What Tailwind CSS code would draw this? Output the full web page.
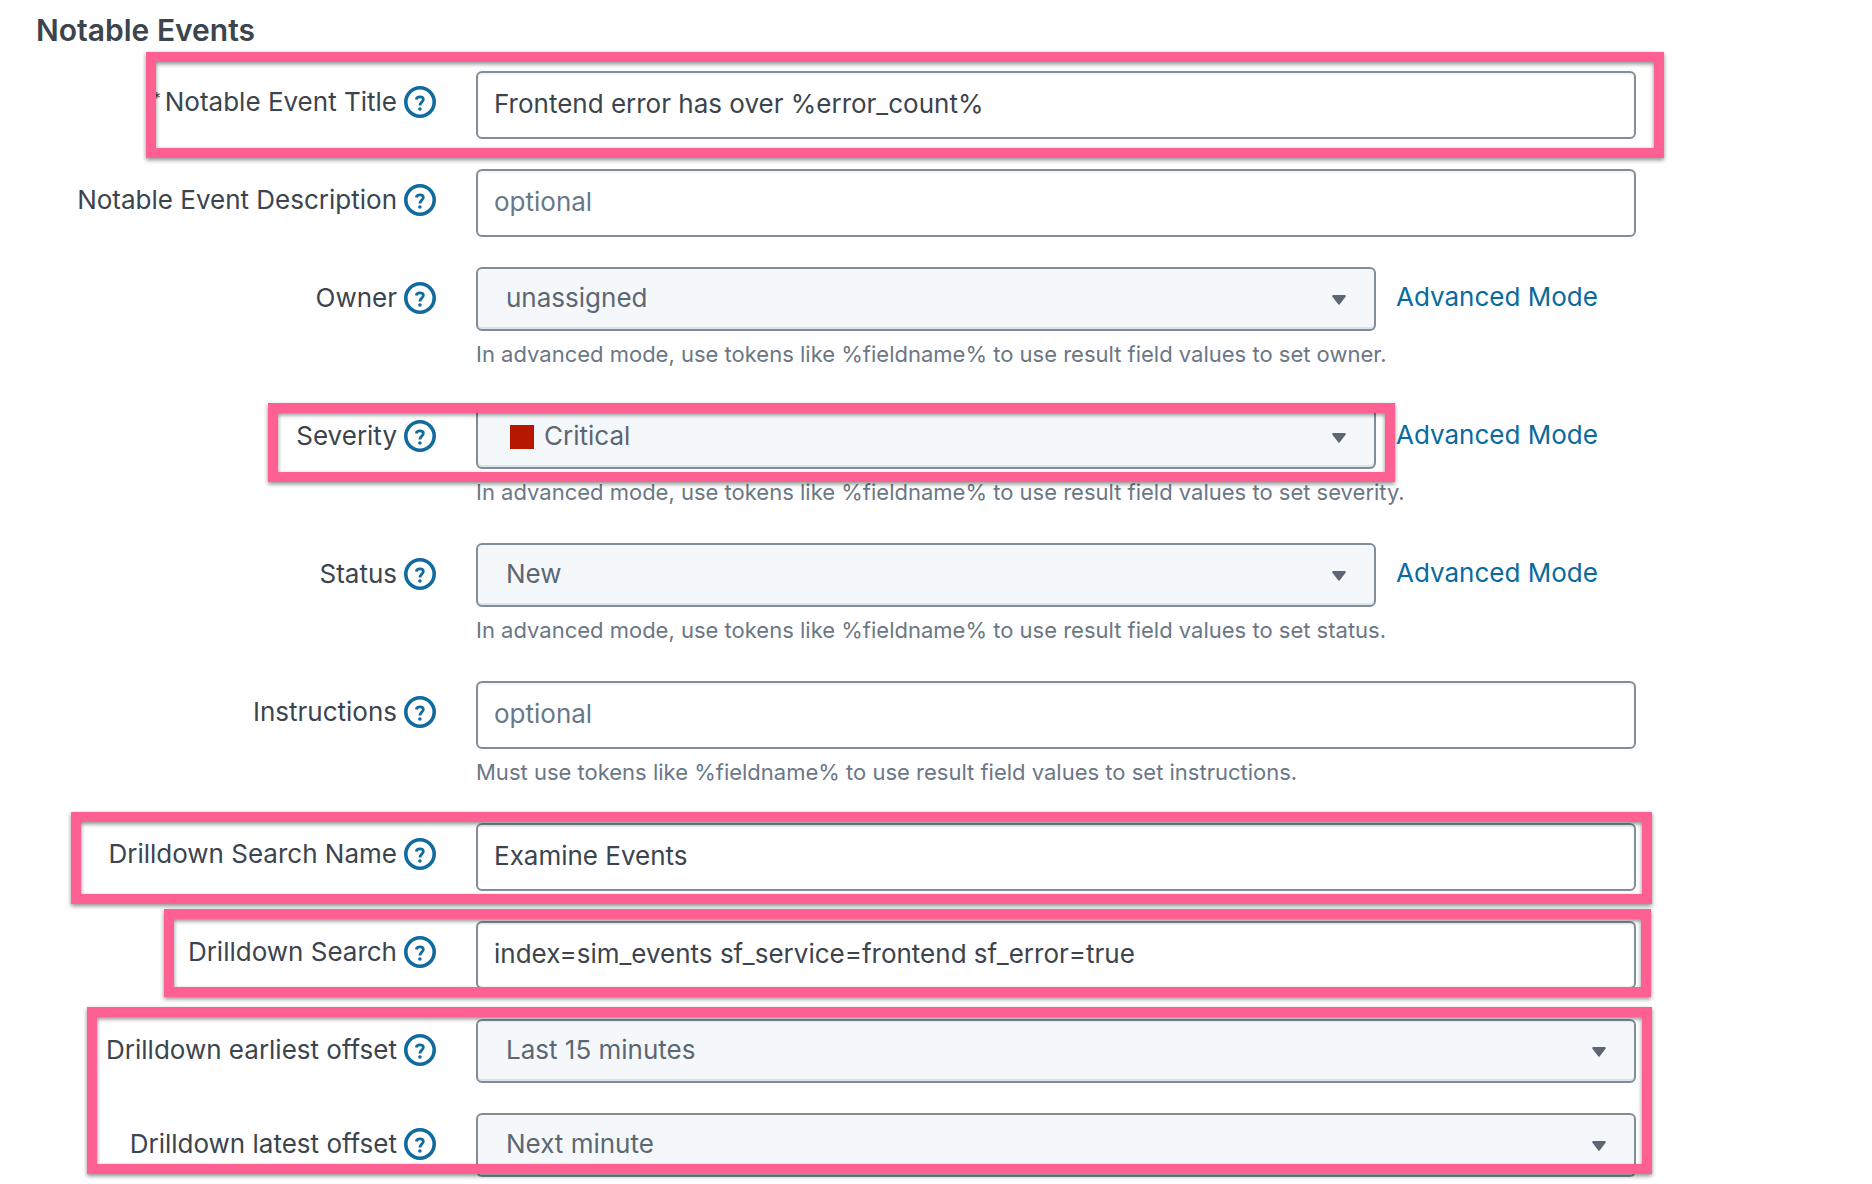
<!DOCTYPE html>
<html lang="en">
<head>
<meta charset="utf-8">
<meta name="viewport" content="width=device-width, initial-scale=1">
<title>Notable Events</title>
<script src="https://cdn.jsdelivr.net/npm/@tailwindcss/browser@4"></script>
</head>
<body class="bg-white font-['Inter',sans-serif] text-[26px] leading-8 text-[#3c444d]">
<svg class="hidden" aria-hidden="true">
  <symbol id="help" viewBox="0 0 32 32">
    <circle cx="16" cy="16" r="14.2" fill="none" stroke="#116b9f" stroke-width="3.6"/>
    <path d="M12.3 13.4C12.6 11.7 14 10.8 15.9 10.8C18 10.8 19.3 11.9 19.3 13.6C19.3 16.2 15.9 16.1 15.9 19.5" fill="none" stroke="#116b9f" stroke-width="2.8"/>
    <circle cx="15.9" cy="23" r="1.8" fill="#116b9f"/>
  </symbol>
  <symbol id="caret" viewBox="0 0 14 10">
    <path d="M1 0H13Q14.4 .6 13.4 1.9L7.8 9.2Q7 10.2 6.2 9.2L.6 1.9Q-.4 .6 1 0Z" fill="#5c6773"/>
  </symbol>
</svg>
<main class="overflow-x-clip pt-3 pr-[236px] pb-[7px] pl-9">
  <h1 class="mb-[23px] text-[30px] leading-9 font-semibold">Notable Events</h1>
  <form class="flex flex-col gap-[30px]">

    <div class="relative grid grid-cols-[400px_minmax(0,1fr)] gap-x-10">
      <div class="flex h-[62px] items-center justify-end gap-[7px]">
        <label for="title" class="flex"><span class="mr-1 text-base leading-6">*</span>Notable Event Title</label>
        <button type="button" aria-label="Help: title"><svg class="size-8"><use href="#help"/></svg></button>
      </div>
      <input id="title" type="text" value="Frontend error has over %error_count%" class="h-[68px] w-full rounded-md border-2 border-[#818d99] bg-white px-4 pb-[3px] shadow-[inset_0_2px_2px_rgba(0,0,0,0.05)]">
      <div class="pointer-events-none absolute -top-[19px] -right-7 left-[110px] h-[106px] border-10 border-[#ff6092] drop-shadow-[0_2px_2px_rgba(0,0,0,0.45)]"></div>
    </div>

    <div class="grid grid-cols-[400px_minmax(0,1fr)] gap-x-10">
      <div class="flex h-[62px] items-center justify-end gap-[7px]">
        <label for="description">Notable Event Description</label>
        <button type="button" aria-label="Help: description"><svg class="size-8"><use href="#help"/></svg></button>
      </div>
      <input id="description" type="text" placeholder="optional" class="h-[68px] w-full rounded-md border-2 border-[#818d99] bg-white px-4 pb-[3px] shadow-[inset_0_2px_2px_rgba(0,0,0,0.05)] placeholder:text-[#6b7785]">
    </div>

    <div class="grid grid-cols-[400px_minmax(0,1fr)] gap-x-10">
      <div class="flex h-[62px] items-center justify-end gap-[7px]">
        <label for="owner">Owner</label>
        <button type="button" aria-label="Help: owner"><svg class="size-8"><use href="#help"/></svg></button>
      </div>
      <div>
        <div class="flex gap-5">
          <div class="relative min-w-0 flex-1">
            <select id="owner" class="block h-16 w-full appearance-none rounded-md border-2 border-[#818d99] bg-[#f5f8fa] pr-14 pb-[3px] pl-7 text-[#5c6773] shadow-[inset_0_-2px_0_#dde3ea]"><option>unassigned</option></select>
            <svg class="pointer-events-none absolute top-7 right-[30px] h-2.5 w-3.5"><use href="#caret"/></svg>
          </div>
          <a href="#" class="flex h-15 w-60 items-center text-[#0a6a9e]">Advanced Mode</a>
        </div>
        <p class="mt-2 pb-1.5 text-[22px] leading-[30px] text-[#6b7785]">In advanced mode, use tokens like %fieldname% to use result field values to set owner.</p>
      </div>
    </div>

    <div class="relative grid grid-cols-[400px_minmax(0,1fr)] gap-x-10">
      <div class="flex h-[62px] items-center justify-end gap-[7px]">
        <label for="severity">Severity</label>
        <button type="button" aria-label="Help: severity"><svg class="size-8"><use href="#help"/></svg></button>
      </div>
      <div>
        <div class="flex gap-5">
          <div class="relative min-w-0 flex-1">
            <select id="severity" class="block h-16 w-full appearance-none rounded-md border-2 border-[#818d99] bg-[#f5f8fa] pr-14 pb-[3px] pl-[66px] text-[#5c6773] shadow-[inset_0_-2px_0_#dde3ea]"><option>Critical</option></select>
            <span class="pointer-events-none absolute top-5 left-[34px] size-6 bg-[#b51700]"></span>
            <svg class="pointer-events-none absolute top-7 right-[30px] h-2.5 w-3.5"><use href="#caret"/></svg>
          </div>
          <a href="#" class="flex h-15 w-60 items-center text-[#0a6a9e]">Advanced Mode</a>
        </div>
        <p class="mt-2 pb-1.5 text-[22px] leading-[30px] text-[#6b7785]">In advanced mode, use tokens like %fieldname% to use result field values to set severity.</p>
      </div>
      <div class="pointer-events-none absolute -top-0.5 right-[241px] left-[232px] h-[79px] border-10 border-[#ff6092] drop-shadow-[0_2px_2px_rgba(0,0,0,0.45)]"></div>
    </div>

    <div class="grid grid-cols-[400px_minmax(0,1fr)] gap-x-10">
      <div class="flex h-[62px] items-center justify-end gap-[7px]">
        <label for="status">Status</label>
        <button type="button" aria-label="Help: status"><svg class="size-8"><use href="#help"/></svg></button>
      </div>
      <div>
        <div class="flex gap-5">
          <div class="relative min-w-0 flex-1">
            <select id="status" class="block h-16 w-full appearance-none rounded-md border-2 border-[#818d99] bg-[#f5f8fa] pr-14 pb-[3px] pl-7 text-[#5c6773] shadow-[inset_0_-2px_0_#dde3ea]"><option>New</option></select>
            <svg class="pointer-events-none absolute top-7 right-[30px] h-2.5 w-3.5"><use href="#caret"/></svg>
          </div>
          <a href="#" class="flex h-15 w-60 items-center text-[#0a6a9e]">Advanced Mode</a>
        </div>
        <p class="mt-2 pb-1.5 text-[22px] leading-[30px] text-[#6b7785]">In advanced mode, use tokens like %fieldname% to use result field values to set status.</p>
      </div>
    </div>

    <div class="grid grid-cols-[400px_minmax(0,1fr)] gap-x-10">
      <div class="flex h-[62px] items-center justify-end gap-[7px]">
        <label for="instructions">Instructions</label>
        <button type="button" aria-label="Help: instructions"><svg class="size-8"><use href="#help"/></svg></button>
      </div>
      <div>
        <input id="instructions" type="text" placeholder="optional" class="block h-[68px] w-full rounded-md border-2 border-[#818d99] bg-white px-4 pb-[3px] shadow-[inset_0_2px_2px_rgba(0,0,0,0.05)] placeholder:text-[#6b7785]">
        <p class="mt-2 pb-1.5 text-[22px] leading-[30px] text-[#6b7785]">Must use tokens like %fieldname% to use result field values to set instructions.</p>
      </div>
    </div>

    <div class="relative grid grid-cols-[400px_minmax(0,1fr)] gap-x-10">
      <div class="flex h-[62px] items-center justify-end gap-[7px]">
        <label for="drill-name">Drilldown Search Name</label>
        <button type="button" aria-label="Help: drilldown search name"><svg class="size-8"><use href="#help"/></svg></button>
      </div>
      <input id="drill-name" type="text" value="Examine Events" class="h-[68px] w-full rounded-md border-2 border-[#818d99] bg-white px-4 pb-[3px] shadow-[inset_0_2px_2px_rgba(0,0,0,0.05)]">
      <div class="pointer-events-none absolute -top-[11px] -right-4 left-[35px] h-[92px] border-10 border-[#ff6092] drop-shadow-[0_2px_2px_rgba(0,0,0,0.45)]"></div>
    </div>

    <div class="relative grid grid-cols-[400px_minmax(0,1fr)] gap-x-10">
      <div class="flex h-[62px] items-center justify-end gap-[7px]">
        <label for="drill-search">Drilldown Search</label>
        <button type="button" aria-label="Help: drilldown search"><svg class="size-8"><use href="#help"/></svg></button>
      </div>
      <input id="drill-search" type="text" value="index=sim_events sf_service=frontend sf_error=true" class="h-[68px] w-full rounded-md border-2 border-[#818d99] bg-white px-4 pb-[3px] shadow-[inset_0_2px_2px_rgba(0,0,0,0.05)]">
      <div class="pointer-events-none absolute -top-3 -right-[15px] left-32 h-[88px] border-10 border-[#ff6092] drop-shadow-[0_2px_2px_rgba(0,0,0,0.45)]"></div>
    </div>

    <div class="relative flex flex-col gap-[30px]">
      <div class="grid grid-cols-[400px_minmax(0,1fr)] gap-x-10">
        <div class="flex h-[62px] items-center justify-end gap-[7px]">
          <label for="earliest">Drilldown earliest offset</label>
          <button type="button" aria-label="Help: earliest offset"><svg class="size-8"><use href="#help"/></svg></button>
        </div>
        <div class="relative">
          <select id="earliest" class="block h-16 w-full appearance-none rounded-md border-2 border-[#818d99] bg-[#f5f8fa] pr-14 pb-[3px] pl-7 text-[#5c6773] shadow-[inset_0_-2px_0_#dde3ea]"><option>Last 15 minutes</option></select>
          <svg class="pointer-events-none absolute top-7 right-[30px] h-2.5 w-3.5"><use href="#caret"/></svg>
        </div>
      </div>
      <div class="grid grid-cols-[400px_minmax(0,1fr)] gap-x-10">
        <div class="flex h-[62px] items-center justify-end gap-[7px]">
          <label for="latest">Drilldown latest offset</label>
          <button type="button" aria-label="Help: latest offset"><svg class="size-8"><use href="#help"/></svg></button>
        </div>
        <div class="relative">
          <select id="latest" class="block h-16 w-full appearance-none rounded-md border-2 border-[#818d99] bg-[#f5f8fa] pr-14 pb-[3px] pl-7 text-[#5c6773] shadow-[inset_0_-2px_0_#dde3ea]"><option>Next minute</option></select>
          <svg class="pointer-events-none absolute top-7 right-[30px] h-2.5 w-3.5"><use href="#caret"/></svg>
        </div>
      </div>
      <div class="pointer-events-none absolute -top-3 -right-4 left-[51px] h-[167px] border-10 border-[#ff6092] drop-shadow-[0_2px_2px_rgba(0,0,0,0.45)]"></div>
    </div>

  </form>
</main>
</body>
</html>
